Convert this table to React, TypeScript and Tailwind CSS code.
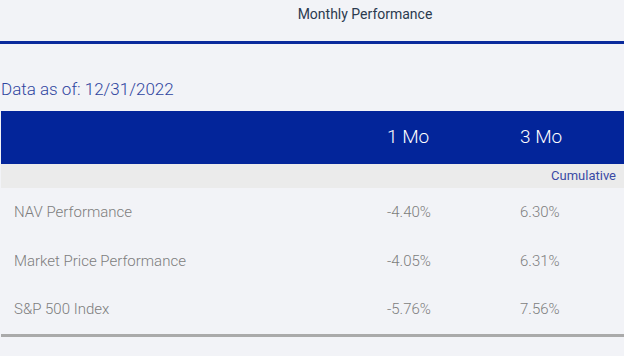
import React from "react";

const rows = [
  { name: "NAV Performance", m1: "-4.40%", m3: "6.30%" },
  { name: "Market Price Performance", m1: "-4.05%", m3: "6.31%" },
  { name: "S&P 500 Index", m1: "-5.76%", m3: "7.56%" },
];

const App = () => {
  return (
    <main
      className="w-[624px] h-[356px] bg-[#f2f3f7] overflow-hidden"
      style={{ fontFamily: "Roboto, 'Liberation Sans', sans-serif" }}
    >
      <header className="h-[41px] flex items-center justify-center pl-[106px]">
        <h1 className="text-[14px] text-[#2b3a4f] pb-[12px]">Monthly Performance</h1>
      </header>
      <div className="h-[3px] bg-[#0a2a9c]" />

      <p className="mt-[35px] pl-[1px] text-[17px] leading-[20px] font-light text-[#2f45a0]">
        Data as of: 12/31/2022
      </p>

      <section className="mt-[12px] ml-[1px]">
        <div className="grid grid-cols-[386px_133px_1fr] h-[53px] items-center bg-[#03259a] text-white text-[19px] font-light">
          <div />
          <div>1 Mo</div>
          <div>3 Mo</div>
        </div>
        <div className="h-[24px] bg-[#ebebeb] flex items-center justify-end pr-[8px] text-[13px] text-[#3a4aa5]">
          Cumulative
        </div>

        {rows.map((r, i) => (
          <div
            key={i}
            className="grid grid-cols-[386px_133px_1fr] h-[48.5px] items-center text-[#7d7d7d] font-light"
          >
            <div className="pl-[13px] text-[15px]">{r.name}</div>
            <div className="text-[15px]">{r.m1}</div>
            <div className="text-[15px]">{r.m3}</div>
          </div>
        ))}
        <div className="h-[3px] bg-[#aaaaaa]" />
      </section>
    </main>
  );
};

export default App;
